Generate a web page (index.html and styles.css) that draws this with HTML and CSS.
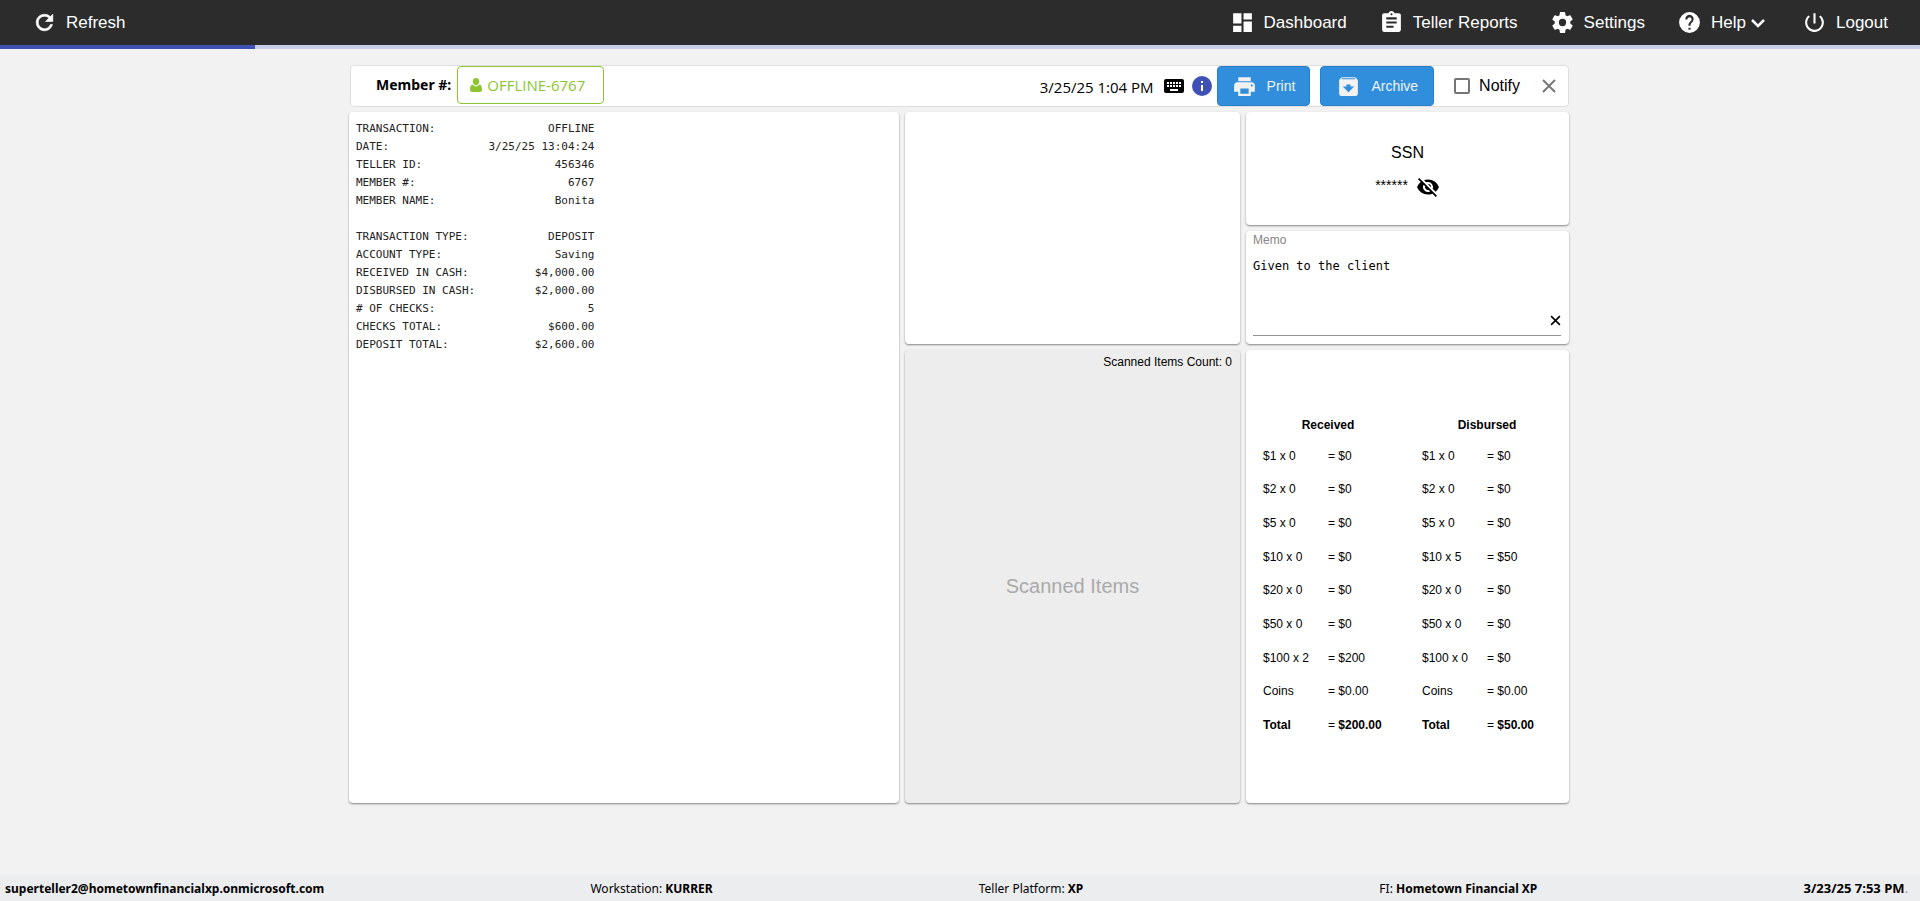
FILE: index.html
```html
<!DOCTYPE html>
<html lang="en">
<head>
  <meta charset="UTF-8">
  <title>Teller - Offline Transaction</title>
  <link rel="stylesheet" href="styles.css">
</head>
<body>

  <header class="topbar">
    <button class="nav-item">
      <svg class="icon" viewBox="0 0 24 24"><path d="M17.65 6.35A7.96 7.96 0 0 0 12 4a8 8 0 1 0 7.73 10h-2.08A6 6 0 1 1 12 6c1.66 0 3.14.69 4.22 1.78L13 11h7V4z" stroke="currentColor" stroke-width=".6"/></svg>
      Refresh
    </button>
    <nav class="menu">
      <a href="#" class="nav-item">
        <svg class="icon" viewBox="0 0 24 24"><path d="M3 13h8V3H3zm0 8h8v-6H3zm10 0h8V11h-8zm0-18v6h8V3z"/></svg>
        Dashboard
      </a>
      <a href="#" class="nav-item">
        <svg class="icon" viewBox="0 0 24 24"><path d="M19 3h-4.180C14.400 1.840 13.300 1 12 1s-2.400.84-2.820 2H5c-1.100 0-2 .9-2 2v14c0 1.100.9 2 2 2h14c1.100 0 2-.9 2-2V5c0-1.100-.9-2-2-2zm-7 0c.55 0 1 .45 1 1s-.45 1-1 1-1-.45-1-1 .45-1 1-1zm2 14H7v-2h7zm3-4H7v-2h10zm0-4H7V7h10z"/></svg>
        Teller Reports
      </a>
      <a href="#" class="nav-item">
        <svg class="icon" viewBox="0 0 24 24"><path d="M19.430 12.980c.04-.32.07-.64.07-.98s-.03-.66-.07-.98l2.110-1.650c.19-.15.24-.42.12-.64l-2-3.460c-.12-.22-.39-.3-.61-.22l-2.490 1c-.52-.4-1.080-.73-1.690-.98l-.38-2.650A.49.49 0 0 0 14 2h-4c-.25 0-.46.18-.49.42l-.38 2.650c-.61.25-1.170.59-1.690.98l-2.490-1c-.23-.09-.49 0-.61.22l-2 3.460c-.13.22-.07.49.12.64l2.110 1.650c-.04.32-.07.65-.07.98s.03.66.07.98l-2.110 1.650c-.19.15-.24.42-.12.64l2 3.460c.12.22.39.3.61.22l2.490-1c.52.4 1.080.73 1.690.98l.38 2.650c.03.24.24.42.49.42h4c.25 0 .46-.18.49-.42l.38-2.650c.61-.25 1.170-.59 1.690-.98l2.490 1c.23.09.49 0 .61-.22l2-3.460c.12-.22.07-.49-.12-.64zM12 15.500a3.500 3.500 0 1 1 0-7 3.500 3.500 0 0 1 0 7z"/></svg>
        Settings
      </a>
      <a href="#" class="nav-item">
        <svg class="icon" viewBox="0 0 24 24"><path d="M12 2a10 10 0 1 0 0 20 10 10 0 0 0 0-20zm1 17h-2v-2h2zm2.070-7.750-.9.920C13.450 12.900 13 13.500 13 15h-2v-.5c0-1.100.45-2.100 1.170-2.830l1.240-1.260A2 2 0 1 0 10 9H8a4 4 0 1 1 7.070 2.250z"/></svg>
        Help
        <svg class="chevron" viewBox="0 0 18 18"><path d="M2 6l6 6 6-6" fill="none" stroke="currentColor" stroke-width="2.500"/></svg>
      </a>
      <a href="#" class="nav-item">
        <svg class="icon" viewBox="0 0 24 24"><path d="M13 3h-2v10h2zm4.830 2.170-1.420 1.420A6.920 6.920 0 0 1 19 12a7 7 0 1 1-11.420-5.420L6.170 5.170A8.930 8.930 0 0 0 3 12a9 9 0 1 0 14.830-6.830z"/></svg>
        Logout
      </a>
    </nav>
  </header>
  <div class="progress"><div class="progress-bar"></div></div>

  <main class="content">
    <section class="member-bar">
      <span class="member-label">Member #:</span>
      <button class="member-btn">
        <svg class="user-icon" viewBox="0 0 12 14"><path d="M6 0a3.200 3.600 0 0 0-3.200 3.600C2.800 5.700 4.200 7.400 6 7.400s3.200-1.700 3.200-3.800A3.200 3.600 0 0 0 6 0zM2.700 6.600C.7 7 0 9 0 11.500 0 13 .9 14 2.200 14h7.600c1.300 0 2.200-1 2.200-2.500 0-2.500-.7-4.500-2.700-4.900C8.500 7.600 7.400 8.400 6 8.400S3.500 7.600 2.700 6.600z"/></svg>
        OFFLINE-6767
      </button>
      <div class="member-actions">
        <span class="date">3/25/25 1:04 PM</span>
        <svg class="icon-small" viewBox="0 0 24 24"><path d="M20 5H4c-1.100 0-1.990.9-1.990 2L2 17c0 1.100.9 2 2 2h16c1.100 0 2-.9 2-2V7c0-1.100-.9-2-2-2zm-9 3h2v2h-2zm0 3h2v2h-2zM8 8h2v2H8zm0 3h2v2H8zm-1 2H5v-2h2zm0-3H5V8h2zm9 7H8v-2h8zm0-4h-2v-2h2zm0-3h-2V8h2zm3 3h-2v-2h2zm0-3h-2V8h2z"/></svg>
        <svg class="icon-small info" viewBox="0 0 24 24"><path d="M12 2a10 10 0 1 0 0 20 10 10 0 0 0 0-20zm1 15h-2v-6h2zm0-8h-2V7h2z"/></svg>
        <button class="btn btn-print">
          <svg class="icon" viewBox="0 0 24 24"><path d="M19 8H5c-1.660 0-3 1.340-3 3v6h4v4h12v-4h4v-6c0-1.660-1.340-3-3-3zm-3 11H8v-5h8zm3-7c-.55 0-1-.45-1-1s.45-1 1-1 1 .45 1 1-.45 1-1 1zm-1-9H6v4h12z"/></svg>
          Print
        </button>
        <button class="btn btn-archive">
          <svg class="icon" viewBox="0 0 24 24"><path d="M20.540 5.230l-1.390-1.680C18.880 3.210 18.470 3 18 3H6c-.47 0-.88.21-1.160.55L3.460 5.230C3.170 5.570 3 6.020 3 6.500V19c0 1.100.9 2 2 2h14c1.100 0 2-.9 2-2V6.500c0-.48-.17-.93-.46-1.270zM12 17.500L6.500 12H10v-2h4v2h3.500zM5.120 5l.81-1h12l.94 1z"/></svg>
          Archive
        </button>
        <label class="notify"><input type="checkbox"> Notify</label>
        <button class="close" aria-label="Close">
          <svg viewBox="0 0 14 14"><path d="M1 1l12 12M13 1L1 13" fill="none" stroke="#777" stroke-width="2"/></svg>
        </button>
      </div>
    </section>

    <section class="panels">
      <div class="card receipt">
<pre>TRANSACTION:                 OFFLINE
DATE:               3/25/25 13:04:24
TELLER ID:                    456346
MEMBER #:                       6767
MEMBER NAME:                  Bonita

TRANSACTION TYPE:            DEPOSIT
ACCOUNT TYPE:                 Saving
RECEIVED IN CASH:          $4,000.00
DISBURSED IN CASH:         $2,000.00
# OF CHECKS:                       5
CHECKS TOTAL:                $600.00
DEPOSIT TOTAL:             $2,600.00</pre>
      </div>

      <div class="card preview"></div>

      <div class="card ssn">
        <div class="ssn-title">SSN</div>
        <div class="ssn-value">
          <span>******</span>
          <button class="eye" aria-label="Show SSN">
            <svg class="icon" viewBox="0 0 24 24"><path d="M12 7a5 5 0 0 1 4.640 6.830l2.920 2.920A11.820 11.820 0 0 0 22.990 12C21.260 7.610 16.990 4.500 11.990 4.500c-1.400 0-2.740.25-3.980.7l2.160 2.160C10.740 7.130 11.350 7 12 7zM2 4.270l2.280 2.280.46.46A11.800 11.800 0 0 0 1 12c1.730 4.390 6 7.500 11 7.500 1.550 0 3.030-.3 4.380-.84l.42.42L19.730 22 21 20.730 3.270 3zM7.530 9.800l1.550 1.550A3 3 0 0 0 12.650 14.920l1.550 1.550A5 5 0 0 1 7.530 9.800zm4.310-.78l3.150 3.150.02-.16a3 3 0 0 0-3-3z"/></svg>
          </button>
        </div>
      </div>

      <div class="card memo">
        <label for="memo">Memo</label>
        <div class="memo-field">
          <textarea id="memo">Given to the client</textarea>
          <button class="clear" aria-label="Clear memo">
            <svg viewBox="0 0 10 10"><path d="M1 1l8 8M9 1L1 9" fill="none" stroke="#000" stroke-width="1.400"/></svg>
          </button>
        </div>
      </div>

      <div class="card scanned">
        <div class="scanned-count">Scanned Items Count: 0</div>
        <div class="scanned-empty">Scanned Items</div>
      </div>

      <div class="card cash">
        <table>
          <thead><tr><th colspan="2">Received</th></tr></thead>
          <tbody>
            <tr><td>$1 x 0</td><td>= $0</td></tr>
            <tr><td>$2 x 0</td><td>= $0</td></tr>
            <tr><td>$5 x 0</td><td>= $0</td></tr>
            <tr><td>$10 x 0</td><td>= $0</td></tr>
            <tr><td>$20 x 0</td><td>= $0</td></tr>
            <tr><td>$50 x 0</td><td>= $0</td></tr>
            <tr><td>$100 x 2</td><td>= $200</td></tr>
            <tr><td>Coins</td><td>= $0.00</td></tr>
            <tr><td><b>Total</b></td><td>= <b>$200.00</b></td></tr>
          </tbody>
        </table>
        <table>
          <thead><tr><th colspan="2">Disbursed</th></tr></thead>
          <tbody>
            <tr><td>$1 x 0</td><td>= $0</td></tr>
            <tr><td>$2 x 0</td><td>= $0</td></tr>
            <tr><td>$5 x 0</td><td>= $0</td></tr>
            <tr><td>$10 x 5</td><td>= $50</td></tr>
            <tr><td>$20 x 0</td><td>= $0</td></tr>
            <tr><td>$50 x 0</td><td>= $0</td></tr>
            <tr><td>$100 x 0</td><td>= $0</td></tr>
            <tr><td>Coins</td><td>= $0.00</td></tr>
            <tr><td><b>Total</b></td><td>= <b>$50.00</b></td></tr>
          </tbody>
        </table>
      </div>
    </section>
  </main>

  <footer class="statusbar">
    <b>superteller2@hometownfinancialxp.onmicrosoft.com</b>
    <span>Workstation: <b>KURRER</b></span>
    <span class="platform">Teller Platform: <b>XP</b></span>
    <span>FI: <b>Hometown Financial XP</b></span>
    <span class="clock"><b>3/23/25 7:53 PM</b><span class="dots">.</span></span>
  </footer>

</body>
</html>
```

FILE: styles.css
```css
* {
  box-sizing: border-box;
}
body {
  margin: 0;
  min-height: 100vh;
  display: flex;
  flex-direction: column;
  background: #f2f2f2;
  color: #000;
  font-family: "Liberation Sans", Arial, sans-serif;
  font-size: 16px;
}
button {
  font-family: inherit;
  background: none;
  border: none;
  padding: 0;
  cursor: pointer;
}
svg {
  display: block;
  fill: currentColor;
  flex: none;
}

/* top navigation */
.topbar {
  display: flex;
  justify-content: space-between;
  align-items: center;
  height: 45px;
  padding: 0 32px;
  background: #2c2c2c;
}
.menu {
  display: flex;
  gap: 32px;
}
.nav-item {
  display: flex;
  align-items: center;
  gap: 9px;
  color: #fff;
  font-size: 17px;
  line-height: 24px;
  text-decoration: none;
}
.nav-item .icon {
  width: 25px;
  height: 25px;
}
.chevron {
  width: 18px;
  height: 18px;
  margin: 0 2px 0 -5px;
}
.progress {
  height: 4px;
  background: #c9cde8;
}
.progress-bar {
  width: 13.3%;
  height: 4px;
  background: #3f51b5;
}

/* main area */
.content {
  flex: 1;
  width: 100%;
  max-width: 1222px;
  margin: 0 auto;
  padding: 16px 2px 16px 0;
}
.icon {
  width: 24px;
  height: 24px;
}
.member-bar {
  display: flex;
  align-items: center;
  height: 42px;
  margin: 0 0 5px 1px;
  padding: 0 12px 0 25px;
  background: #fff;
  border: 1px solid #dedede;
  border-radius: 4px;
}
.member-label {
  font-family: "Noto Sans", "Segoe UI", sans-serif;
  font-size: 14px;
  font-weight: bold;
  padding-bottom: 4px;
}
.member-btn {
  display: flex;
  align-items: center;
  align-self: flex-start;
  gap: 5px;
  width: 147px;
  height: 38px;
  margin-left: 6px;
  padding-left: 12px;
  border: 1px solid #8dc431;
  border-radius: 4px;
  color: #8dc431;
  font-family: "Open Sans", "Segoe UI", sans-serif;
  font-size: 15px;
}
.user-icon {
  width: 12px;
  height: 14px;
}
.member-actions {
  display: flex;
  align-items: center;
  margin-left: auto;
}
.date {
  font-family: "Open Sans", "Segoe UI", sans-serif;
  font-size: 15px;
  margin-right: 8px;
  padding-top: 2px;
}
.icon-small {
  width: 24px;
  height: 24px;
  margin-right: 4px;
}
.info {
  color: #3f51b5;
  margin-right: 3px;
}
.btn {
  display: flex;
  align-items: center;
  justify-content: center;
  gap: 10px;
  height: 40px;
  padding: 0 15px;
  background: #308edd;
  border: 1px solid #2a7fc8;
  border-radius: 4px;
  color: #f2f2f2;
  font-size: 14px;
}
.btn .icon {
  width: 25px;
  height: 25px;
}
.btn-print {
  margin-right: 10px;
  padding: 0 14px;
}
.btn-archive {
  margin-right: 20px;
}
.notify {
  display: flex;
  align-items: center;
  gap: 9px;
}
.notify input {
  appearance: none;
  width: 16px;
  height: 16px;
  margin: 0;
  border: 2px solid #757575;
  border-radius: 2px;
}
.close {
  margin-left: 22px;
}
.close svg {
  width: 14px;
  height: 14px;
}

.panels {
  display: grid;
  grid-template-columns: 550fr 335fr 323fr;
  grid-template-rows: 113px 113px minmax(453px, auto);
  gap: 6px;
}
.card {
  background: #fff;
  border-radius: 4px;
  box-shadow: 0 1px 2px rgba(0, 0, 0, 0.45);
}
.receipt {
  grid-row: 1 / 4;
  padding: 8px 7px;
}
.receipt pre {
  margin: 0;
  color: #222;
  font-family: "DejaVu Sans Mono", Consolas, monospace;
  font-size: 11px;
  line-height: 18px;
}
.preview {
  grid-row: 1 / 3;
}
.ssn {
  display: flex;
  flex-direction: column;
  align-items: center;
  justify-content: center;
  gap: 13px;
  padding-top: 5px;
}
.ssn-value {
  display: flex;
  gap: 8px;
  font-size: 14px;
}
.ssn-value span {
  padding-top: 2px;
}
.memo {
  grid-column: 3;
  display: flex;
  flex-direction: column;
  padding: 2px 8px 8px 7px;
}
.memo label {
  color: #858585;
  font-size: 12px;
  line-height: 14px;
}
.memo-field {
  flex: 1;
  display: flex;
  align-items: flex-end;
  border-bottom: 1px solid #949494;
}
.memo textarea {
  flex: 1;
  height: 100%;
  padding: 12px 0 0;
  border: none;
  outline: none;
  resize: none;
  background: none;
  color: #000;
  font-family: "DejaVu Sans Mono", Consolas, monospace;
  font-size: 12px;
  line-height: 14px;
}
.clear {
  padding-bottom: 9px;
}
.clear svg {
  width: 11px;
  height: 11px;
}
.scanned {
  grid-column: 2;
  display: flex;
  flex-direction: column;
  background: #ededed;
}
.scanned-count {
  padding: 5px 8px 0;
  font-size: 12px;
  line-height: 14px;
  text-align: right;
}
.scanned-empty {
  flex: 1;
  display: flex;
  align-items: center;
  justify-content: center;
  color: #aaa;
  font-size: 20px;
}
.cash {
  grid-column: 3;
  display: flex;
  align-items: center;
  justify-content: center;
  gap: 29px;
}
.cash table {
  width: 130px;
  height: 331px;
  border-collapse: collapse;
  table-layout: fixed;
  font-size: 12px;
}
.cash th {
  height: 28px;
  padding: 0;
}
.cash td {
  padding: 0;
  white-space: nowrap;
}
.cash td:first-child {
  width: 66px;
}

/* bottom status bar */
.statusbar {
  display: flex;
  justify-content: space-between;
  align-items: center;
  height: 26px;
  padding: 0 12px 0 5px;
  background: #ecedef;
  font-family: "Noto Sans", "Segoe UI", sans-serif;
  font-size: 12px;
}
.platform {
  margin-right: 30px;
}
.clock {
  font-size: 13px;
}
.dots {
  color: #8fa3b5;
}
```
